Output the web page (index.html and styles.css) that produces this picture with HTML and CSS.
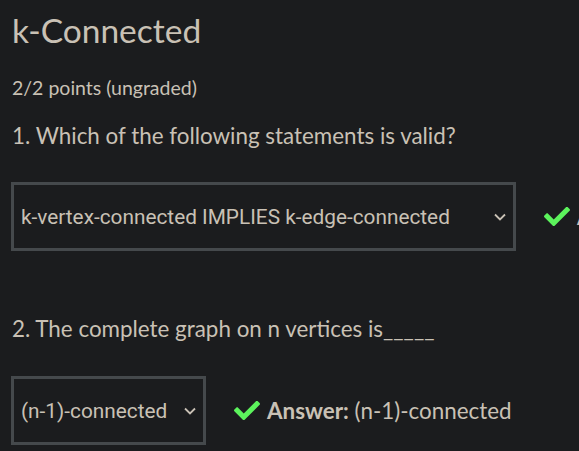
FILE: index.html
```html
<!DOCTYPE html>
<html>
<head>
<meta charset="utf-8">
<link rel="stylesheet" href="styles.css">
</head>
<body>
<div class="problem">
  <h2 class="title">k-Connected</h2>
  <div class="points">2/2 points (ungraded)</div>
  <p class="question">1. Which of the following statements is valid?</p>
  <div class="answer-row">
    <div class="select wide"><span class="sel-text">k-vertex-connected IMPLIES k-edge-connected</span><span class="chev"><svg width="12" height="8" viewBox="0 0 12 8"><path d="M1 1.5l5 5 5-5" fill="none" stroke="currentColor" stroke-width="1.8"/></svg></span></div>
    <span class="status"><svg class="check" viewBox="0 0 512 370" width="26" height="19"><path transform="translate(0,-71)" d="M173.898 439.404l-166.4-166.4c-9.997-9.997-9.997-26.206 0-36.204l36.203-36.204c9.997-9.998 26.207-9.998 36.204 0L192 312.69 432.095 72.596c9.997-9.997 26.207-9.997 36.204 0l36.203 36.204c9.997 9.997 9.997 26.206 0 36.204l-294.4 294.401c-9.998 9.997-26.207 9.997-36.204-.001z"/></svg><span class="ans"><b>Answer:</b> k-vertex-connected IMPLIES k-edge-connected</span></span>
  </div>
  <p class="question q2">2. The complete graph on n vertices is_____</p>
  <div class="answer-row row2">
    <div class="select"><span class="sel-text">(n-1)-connected</span><span class="chev"><svg width="12" height="8" viewBox="0 0 12 8"><path d="M1 1.5l5 5 5-5" fill="none" stroke="currentColor" stroke-width="1.8"/></svg></span></div>
    <span class="status"><svg class="check" viewBox="0 0 512 370" width="26" height="19"><path transform="translate(0,-71)" d="M173.898 439.404l-166.4-166.4c-9.997-9.997-9.997-26.206 0-36.204l36.203-36.204c9.997-9.998 26.207-9.998 36.204 0L192 312.69 432.095 72.596c9.997-9.997 26.207-9.997 36.204 0l36.203 36.204c9.997 9.997 9.997 26.206 0 36.204l-294.4 294.401c-9.998 9.997-26.207 9.997-36.204-.001z"/></svg><span class="ans"><b>Answer:</b> (n-1)-connected</span></span>
  </div>
</div>
</body>
</html>
```
FILE: styles.css
```css
html, body {
  margin: 0;
  background: #1b1c1e;
  overflow: hidden;
}
body {
  width: 579px;
  height: 451px;
}
.problem {
  padding: 0 0 0 12px;
  color: #c9c1b5;
  font-family: Lato, "Noto Sans", sans-serif;
}
.title {
  margin: 0;
  padding-top: 10px;
  font-size: 33.5px;
  font-weight: 400;
  line-height: 40px;
}
.points {
  margin-top: 26px;
  font-size: 19.5px;
  line-height: 24px;
}
.question {
  margin: 22px 0 0 0;
  font-size: 22.4px;
  line-height: 28px;
}
.q2 {
  margin-top: 64px;
}
.answer-row {
  display: flex;
  align-items: center;
  margin-top: 32px;
  white-space: nowrap;
}
.row2 {
  margin-top: 33px;
}
.select {
  flex: none;
  box-sizing: border-box;
  height: 69px;
  width: 195px;
  margin-left: -1px;
  border: 3px solid #45494c;
  display: flex;
  align-items: center;
  padding: 0 7px 0 7px;
  font-family: Roboto, "Liberation Sans", sans-serif;
  font-size: 20.8px;
  color: #c9c1b5;
}
.select.wide {
  width: 505px;
}
.sel-text {
  flex: 1;
}
.chev {
  display: flex;
  color: #c9c1b5;
  margin-left: 10px;
}
.status {
  flex: none;
  display: flex;
  align-items: center;
  margin-left: 28px;
  font-size: 22.4px;
}
.check {
  fill: #5cf35c;
  flex: none;
}
.ans {
  margin-left: 7px;
}
.ans b {
  font-weight: 700;
}
```
